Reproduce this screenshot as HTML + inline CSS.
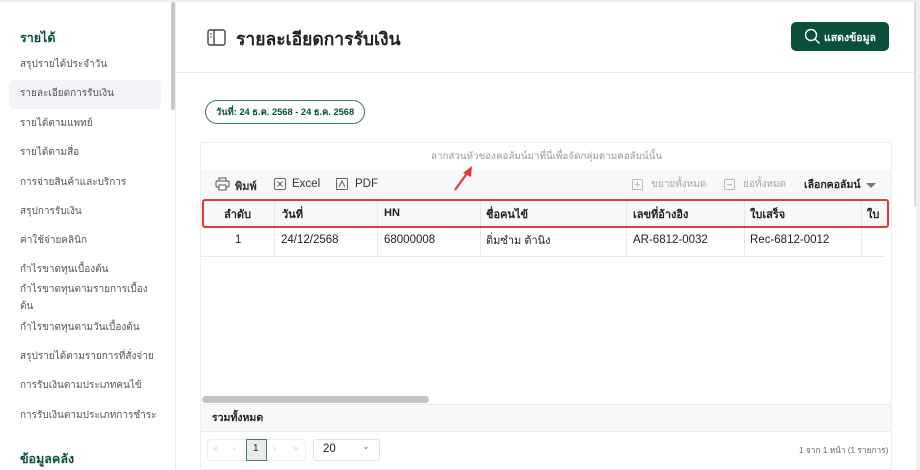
<!DOCTYPE html>
<html><head><meta charset="utf-8"><style>
*{margin:0;padding:0;box-sizing:border-box}
body{width:920px;height:470px;overflow:hidden;background:#fff;font-family:"Liberation Sans","Noto Sans CJK SC",sans-serif;position:relative;color:#222}
.a{position:absolute;white-space:nowrap}
.sb{font-size:10px;color:#555}
.th{font-size:11px;font-weight:bold;color:#222;top:205px}
.td{font-size:11.5px;color:#222;top:234px}
.vl{position:absolute;width:1px;background:#e6e8eb}
</style></head><body>
<div class="a" style="left:0;top:0;width:920px;height:2px;background:#eee"></div>
<!-- sidebar -->
<div class="a" style="left:171px;top:2px;width:4px;height:108px;background:#c8c8c8;border-radius:2px"></div>
<div class="a" style="left:175px;top:2px;width:1px;height:468px;background:#eceef0"></div>
<div class="a" style="left:20px;top:28px;font-size:12.5px;font-weight:bold;color:#0a4f3c">รายได้</div>
<div class="a" style="left:9px;top:80px;width:152px;height:29px;background:#f1f3f6;border-radius:5px"></div>
<div class="a sb" style="left:20px;top:57px">สรุปรายได้ประจำวัน</div>
<div class="a sb" style="left:20px;top:86px">รายละเอียดการรับเงิน</div>
<div class="a sb" style="left:20px;top:116px">รายได้ตามแพทย์</div>
<div class="a sb" style="left:20px;top:145px">รายได้ตามสื่อ</div>
<div class="a sb" style="left:20px;top:175px">การจ่ายสินค้าและบริการ</div>
<div class="a sb" style="left:20px;top:204px">สรุปการรับเงิน</div>
<div class="a sb" style="left:20px;top:233px">ค่าใช้จ่ายคลินิก</div>
<div class="a sb" style="left:20px;top:262px">กำไรขาดทุนเบื้องต้น</div>
<div class="a sb" style="left:20px;top:282px">กำไรขาดทุนตามรายการเบื้อง</div>
<div class="a sb" style="left:20px;top:299px">ต้น</div>
<div class="a sb" style="left:20px;top:320px">กำไรขาดทุนตามวันเบื้องต้น</div>
<div class="a sb" style="left:20px;top:349px">สรุปรายได้ตามรายการที่สั่งจ่าย</div>
<div class="a sb" style="left:20px;top:378px">การรับเงินตามประเภทคนไข้</div>
<div class="a sb" style="left:20px;top:408px">การรับเงินตามประเภทการชำระ</div>
<div class="a" style="left:20px;top:449px;font-size:12.5px;font-weight:bold;color:#0a4f3c">ข้อมูลคลัง</div>
<!-- header -->
<svg class="a" style="left:207px;top:29px" width="19" height="17" viewBox="0 0 19 17"><rect x="1" y="1" width="17" height="15" rx="2" fill="none" stroke="#444" stroke-width="1.4"/><line x1="7" y1="1" x2="7" y2="16" stroke="#444" stroke-width="1.4"/><line x1="3" y1="5" x2="5" y2="5" stroke="#444"/><line x1="3" y1="8" x2="5" y2="8" stroke="#444"/></svg>
<div class="a" style="left:236px;top:25px;font-size:17.5px;font-weight:bold;color:#222">รายละเอียดการรับเงิน</div>
<div class="a" style="left:791px;top:22px;width:98px;height:29px;background:#0a4f3c;border-radius:5px"></div>
<svg class="a" style="left:804px;top:28px" width="17" height="17" viewBox="0 0 17 17"><circle cx="7" cy="7" r="5.5" fill="none" stroke="#fff" stroke-width="1.4"/><line x1="11" y1="11" x2="15.5" y2="15.5" stroke="#fff" stroke-width="1.4"/></svg>
<div class="a" style="left:824px;top:29px;font-size:10.5px;font-weight:bold;color:#fff">แสดงข้อมูล</div>
<div class="a" style="left:176px;top:72px;width:740px;height:1px;background:#e8eaed"></div>
<div class="a" style="left:916px;top:0;width:4px;height:470px;background:#f0f0f0"></div>
<div class="a" style="left:914px;top:2px;width:2px;height:205px;background:#ddd"></div>
<!-- pill -->
<div class="a" style="left:205px;top:100px;width:160px;height:24px;border:1.3px solid #3d7a66;border-radius:12px"></div>
<div class="a" style="left:216px;top:105px;font-size:9.3px;font-weight:bold;color:#0a4f3c">วันที่: 24 ธ.ค. 2568 - 24 ธ.ค. 2568</div>
<!-- grid -->
<div class="a" style="left:200px;top:142px;width:692px;height:328px;border:1px solid #eceef0;background:#fff"></div>
<div class="a" style="left:431px;top:149px;font-size:9.8px;color:#999">ลากส่วนหัวของคอลัมน์มาที่นี่เพื่อจัดกลุ่มตามคอลัมน์นั้น</div>
<div class="a" style="left:201px;top:170px;width:690px;height:28px;background:#f7f8fa"></div>
<svg class="a" style="left:450px;top:162px" width="28" height="32" viewBox="0 0 28 32"><line x1="5" y1="28" x2="18" y2="10" stroke="#e03b3b" stroke-width="2.2"/><polygon points="22,4 13,11 21,15" fill="#e03b3b"/></svg>
<svg class="a" style="left:215px;top:177px" width="15" height="14" viewBox="0 0 15 14"><rect x="4" y="1" width="7" height="3" fill="none" stroke="#555"/><rect x="1" y="4" width="13" height="6" rx="1" fill="none" stroke="#555"/><rect x="4" y="8" width="7" height="5" fill="#fff" stroke="#555"/></svg>
<div class="a" style="left:235px;top:177px;font-size:11px;font-weight:bold;color:#333">พิมพ์</div>
<svg class="a" style="left:274px;top:178px" width="12" height="12"><rect x="0.5" y="0.5" width="11" height="11" rx="1" fill="none" stroke="#666"/><path d="M3.5 3.5L8.5 8.5M8.5 3.5L3.5 8.5" stroke="#666"/></svg>
<div class="a" style="left:292px;top:178px;font-size:11.5px;color:#333">Excel</div>
<svg class="a" style="left:336px;top:178px" width="12" height="12"><rect x="0.5" y="0.5" width="11" height="11" rx="1" fill="none" stroke="#666"/><path d="M3 9L6 3L9 9" fill="none" stroke="#666"/></svg>
<div class="a" style="left:355px;top:178px;font-size:11.5px;color:#333">PDF</div>
<svg class="a" style="left:632px;top:177px" width="13" height="13"><rect x="0.5" y="2.5" width="10" height="10" rx="1" fill="none" stroke="#bbb"/><path d="M5.5 5v5M3 7.5h5" stroke="#bbb"/></svg>
<div class="a" style="left:651px;top:177px;font-size:10px;color:#aaa">ขยายทั้งหมด</div>
<svg class="a" style="left:724px;top:177px" width="13" height="13"><rect x="0.5" y="2.5" width="10" height="10" rx="1" fill="none" stroke="#bbb"/><path d="M3 7.5h5" stroke="#bbb"/></svg>
<div class="a" style="left:743px;top:177px;font-size:10px;color:#aaa">ย่อทั้งหมด</div>
<div class="a" style="left:804px;top:176px;font-size:10.5px;font-weight:bold;color:#222">เลือกคอลัมน์</div>
<div class="a" style="left:866px;top:183px;width:0;height:0;border-left:5px solid transparent;border-right:5px solid transparent;border-top:5px solid #777"></div>
<!-- header row -->
<div class="a" style="left:201px;top:199px;width:689px;height:29px;background:#f7f8fa"></div>
<div class="vl" style="left:274px;top:199px;height:57px"></div>
<div class="vl" style="left:377px;top:199px;height:57px"></div>
<div class="vl" style="left:480px;top:199px;height:57px"></div>
<div class="vl" style="left:626px;top:199px;height:57px"></div>
<div class="vl" style="left:744px;top:199px;height:57px"></div>
<div class="vl" style="left:861px;top:199px;height:57px"></div>
<div class="a" style="left:201px;top:256px;width:684px;height:1px;background:#e6e8eb"></div>
<div class="a th" style="left:224px">ลำดับ</div>
<div class="a th" style="left:282px">วันที่</div>
<div class="a th" style="left:384px;top:207px">HN</div>
<div class="a th" style="left:486px">ชื่อคนไข้</div>
<div class="a th" style="left:633px">เลขที่อ้างอิง</div>
<div class="a th" style="left:750px">ใบเสร็จ</div>
<div class="a th" style="left:867px">ใบ</div>
<div class="a" style="left:202px;top:199px;width:687px;height:29px;border:2px solid #e03b3b;border-radius:3px"></div>
<div class="a td" style="left:235px">1</div>
<div class="a td" style="left:281px">24/12/2568</div>
<div class="a td" style="left:384px">68000008</div>
<div class="a td" style="left:486px;top:231px;font-size:11px">ติ่มซำม ต้านิง</div>
<div class="a td" style="left:633px">AR-6812-0032</div>
<div class="a td" style="left:750px">Rec-6812-0012</div>
<!-- scrollbar & footer -->
<div class="a" style="left:202px;top:396px;width:227px;height:7px;background:#c4c4c4;border-radius:4px"></div>
<div class="a" style="left:201px;top:404px;width:690px;height:28px;background:#f7f8fa;border-top:1px solid #e8eaed;border-bottom:1px solid #e8eaed"></div>
<div class="a" style="left:212px;top:409px;font-size:10.5px;font-weight:bold;color:#222">รวมทั้งหมด</div>
<div class="a" style="left:207px;top:439px;width:99px;height:22px;border:1px solid #eceef0;border-radius:3px"></div>
<div class="a" style="left:213px;top:443px;font-size:9px;color:#ccc">«</div>
<div class="a" style="left:233px;top:443px;font-size:9px;color:#ccc">‹</div>
<div class="a" style="left:246px;top:439px;width:21px;height:22px;border:1px solid #4a7d6c;background:#e9ecef"></div>
<div class="a" style="left:253px;top:443px;font-size:10px;color:#222">1</div>
<div class="a" style="left:273px;top:443px;font-size:9px;color:#ccc">›</div>
<div class="a" style="left:293px;top:443px;font-size:9px;color:#ccc">»</div>
<div class="a" style="left:313px;top:439px;width:67px;height:22px;border:1px solid #e0e2e5;border-radius:3px"></div>
<div class="a" style="left:323px;top:443px;font-size:11.5px;color:#222">20</div>
<div class="a" style="left:362px;top:441px;font-size:9px;color:#666">⌄</div>
<div class="a" style="left:799px;top:443px;font-size:8.3px;color:#666">1 จาก 1 หน้า (1 รายการ)</div>
</body></html>
